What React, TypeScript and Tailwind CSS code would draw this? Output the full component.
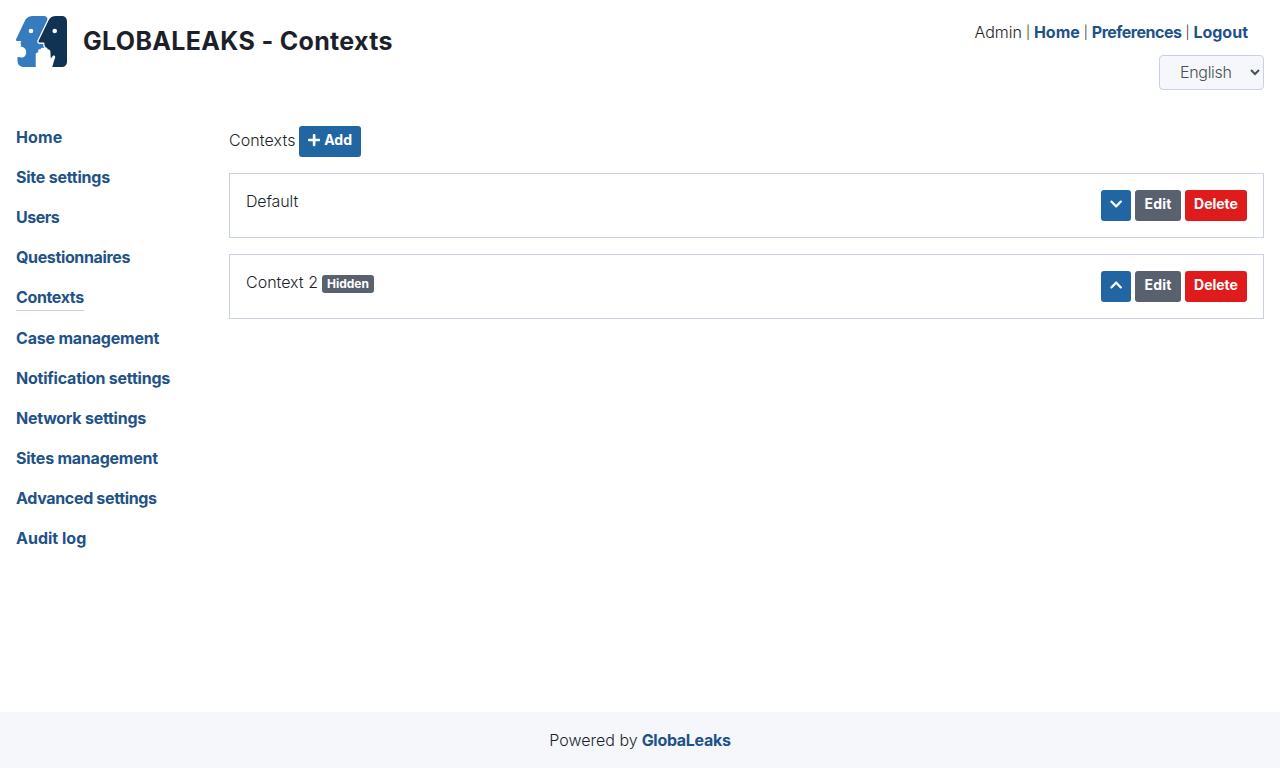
import { FaPlus, FaChevronDown, FaChevronUp } from "react-icons/fa";

const navItems: { label: string; style: string; active?: boolean }[] = [
  { label: "Home", style: "tracking-[0.1px]" },
  { label: "Site settings", style: "tracking-[-0.23px]" },
  { label: "Users", style: "tracking-[-0.5px]" },
  { label: "Questionnaires", style: "tracking-[-0.36px]" },
  { label: "Contexts", style: "tracking-[-0.37px]", active: true },
  { label: "Case management", style: "tracking-[-0.2px]" },
  { label: "Notification settings", style: "tracking-[-0.22px]" },
  { label: "Network settings", style: "tracking-[-0.25px]" },
  { label: "Sites management", style: "tracking-[-0.23px]" },
  { label: "Advanced settings", style: "tracking-[-0.33px]" },
  { label: "Audit log", style: "" },
];

function Logo() {
  return (
    <svg viewBox="0 0 51 51" className="h-[51px] w-[51px] shrink-0" aria-label="GlobaLeaks">
      <path
        fill="#377bbf"
        d="M18 0H28C30 0 31.500 1.300 31.500 3.500L32 32V51H8C4 51 1.500 48.500 1.500 45V41.300C3 40.500 4 41.600 5.500 41.600C8.500 41.600 10.300 39 10.200 36C10.100 33 8 31 4.600 30.600L5.200 28.500L4.400 27.500L5.200 25H1C0 25 -.3 24.300 .2 23L9 4.500C10.800 1.200 13.500 0 18 0Z"
      />
      <path
        fill="#103253"
        stroke="#fff"
        strokeWidth="2.600"
        paintOrder="stroke"
        d="M40 0H45.500C49 0 51 2 51 5.500V45.500C51 49 49 51 45.500 51H30V32L28.600 29.500L28.200 26.600H23.500C22.500 26.600 22.300 25.800 22.700 24.800L32.500 4.500C34 1.300 36.500 0 40 0Z"
      />
      <path
        fill="#fff"
        d="M19.700 52V38.200C19.700 37 21 36.700 22.200 36.600V34.500C22.200 33.300 23.300 33 24.800 33.400V32.500C25.200 31.500 26.500 31.500 27.800 32L29.500 31.500C31 31.500 31.300 32.200 31.800 33.200C33.500 33.200 34.300 34 34.400 36L34.800 42.500L37 39.800C38.200 39.200 39.300 40 39.200 41.200L37.500 46.500L36 52Z"
      />
      <circle cx="15" cy="15" r="2.300" fill="#fff" />
      <circle cx="38.700" cy="15" r="2.300" fill="#fff" />
    </svg>
  );
}

function Divider() {
  return <span className="w-1 text-center text-[13px] font-light">|</span>;
}

function RowButtons({ up }: { up?: boolean }) {
  return (
    <div className="flex gap-1 text-sm font-bold text-white">
      <button className="flex h-[31px] w-[30px] justify-center rounded-[3px] bg-[#2165a3] pt-[7px]">
        {up ? <FaChevronUp className="h-[14px] w-[12.250px]" /> : <FaChevronDown className="h-[14px] w-[12.250px]" />}
      </button>
      <button className="h-[31px] w-[46px] rounded-[3px] bg-[#59606e] pb-[3px] tracking-[0.2px]">Edit</button>
      <button className="h-[31px] w-[62px] rounded-[3px] bg-[#df1b1b] pb-[3px]">Delete</button>
    </div>
  );
}

export default function App() {
  return (
    <div className="flex h-[768px] flex-col overflow-hidden bg-white font-['Inter','Liberation_Sans',sans-serif] text-base text-[#1d1f2a]">
      <header className="flex h-[110px] justify-between px-4 pt-4">
        <div className="flex gap-4">
          <Logo />
          <h1 className="h-12 whitespace-nowrap text-[25px] leading-[50px] font-bold tracking-[0.34px]">GLOBALEAKS - Contexts</h1>
        </div>
        <div className="flex flex-col items-end">
          <div className="flex h-[39px] gap-1 pr-4 leading-[33px]">
            <span className="font-light">Admin</span>
            <Divider />
            <a className="font-bold text-[#1f5288]">Home</a>
            <Divider />
            <a className="font-bold tracking-[-0.5px] text-[#1f5288]">Preferences</a>
            <Divider />
            <a className="font-bold text-[#1f5288]">Logout</a>
          </div>
          <select className="h-[35px] w-[105px] rounded border border-[#c8d2e2] bg-[#f5f7fb] pb-px pl-4 font-light tracking-[-0.3px] text-[#495057]">
            <option>English</option>
          </select>
        </div>
      </header>
      <main className="flex flex-1 px-4 pt-4">
        <nav className="flex w-[213px] flex-col items-start font-bold text-[#1f5288]">
          {navItems.map((item) => (
            <a
              key={item.label}
              className={item.active ? "mb-4 h-[25px] border-b border-[#c8d2e2] leading-[23px]" : "mb-4 h-6 leading-[23px]"}
            >
              <span className={item.style}>{item.label}</span>
            </a>
          ))}
        </nav>
        <section className="flex flex-1 flex-col">
          <div className="mb-4 flex h-[31px] gap-1">
            <span className="w-[66px] leading-[29px] font-light tracking-[0.1px]">Contexts</span>
            <button className="flex h-[31px] w-[62px] items-center justify-center gap-1 rounded-[3px] bg-[#2165a3] pb-[3px] text-sm font-bold text-white">
              <FaPlus className="h-[14px] w-[12.250px]" />
              <span>Add</span>
            </button>
          </div>
          <div className="mb-4 flex h-[65px] justify-between border border-[#c8d2e2] p-4">
            <span className="leading-[23px] font-light tracking-[-0.15px]">Default</span>
            <RowButtons />
          </div>
          <div className="flex h-[65px] justify-between border border-[#c8d2e2] p-4">
            <div className="flex gap-1">
              <span className="w-[72px] whitespace-nowrap leading-[23px] font-light">Context 2</span>
              <span className="mt-1 h-[18px] w-[52px] rounded-[3px] bg-[#59606e] text-center text-xs leading-[18px] font-bold text-white">Hidden</span>
            </div>
            <RowButtons up />
          </div>
        </section>
      </main>
      <footer className="flex h-14 items-center justify-center gap-1 bg-[#f5f7fb] pb-px">
        <span className="font-light">Powered by</span>
        <a className="font-bold tracking-[-0.3px] text-[#1f5288]">GlobaLeaks</a>
      </footer>
    </div>
  );
}
